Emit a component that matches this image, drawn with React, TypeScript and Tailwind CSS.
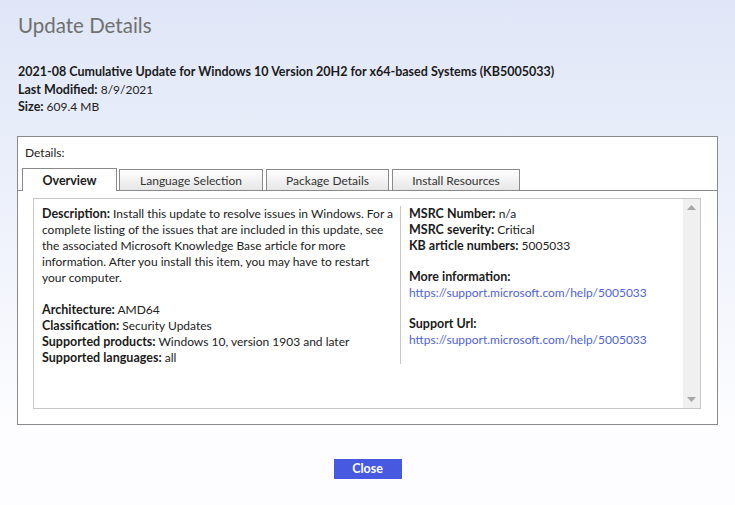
import React from 'react';

const tabs = [
  { label: 'Overview', w: 'w-[95px]', active: true },
  { label: 'Language Selection', w: 'w-[144px]', active: false },
  { label: 'Package Details', w: 'w-[123px]', active: false },
  { label: 'Install Resources', w: 'w-[128px]', active: false },
];

const Field: React.FC<{ label: string; value: string }> = ({ label, value }) => (
  <div>
    <span className="font-bold text-[12.5px] text-[#1b1b1b]">{label}</span> <span>{value}</span>
  </div>
);

const App: React.FC = () => {
  return (
    <div
      className="w-[735px] h-[505px] overflow-hidden bg-linear-to-b from-[#dfe6f7] to-[#fdfdff] to-85% text-[12px] text-[#222]"
      style={{ fontFamily: '"Segoe UI", Lato, "Noto Sans", sans-serif' }}
    >
      <div className="px-[18px] pt-[11px]">
        <h1 className="text-[20.5px] leading-[28px] text-[#707070]">Update Details</h1>

        <div className="mt-[24px] leading-[17.5px]">
          <div className="font-bold text-[12.5px] text-[#1b1b1b]">
            2021-08 Cumulative Update for Windows 10 Version 20H2 for x64-based Systems (KB5005033)
          </div>
          <Field label="Last Modified:" value="8/9/2021" />
          <Field label="Size:" value="609.4 MB" />
        </div>
      </div>

      {/* details panel */}
      <div className="ml-[17px] mt-[20px] w-[701px] h-[289px] border border-[#8a8a8a] bg-white flex flex-col">
        <div className="pl-[7px] pt-[8px] leading-[16px]">Details:</div>

        <div className="mt-[7px] flex items-end h-[23px]">
          <div className="w-[4px] border-b border-[#8a8a8a] h-full" />
          {tabs.map((t, i) =>
            t.active ? (
              <div
                key={t.label}
                className={`${t.w} h-[23px] pt-[3px] border border-b-0 border-[#8a8a8a] bg-white flex items-center justify-center font-bold text-[12.5px] text-[#1b1b1b]`}
              >
                {t.label}
              </div>
            ) : (
              <div key={t.label} className="flex items-end h-full border-b border-[#8a8a8a]">
                <div className={i === 1 ? 'w-[2px]' : 'w-[3px]'} />
                <div
                  className={`${t.w} h-[21px] pt-[3px] border border-b-0 border-[#8a8a8a] bg-linear-to-b from-white to-[#e6e6e6] flex items-center justify-center text-[#333]`}
                >
                  {t.label}
                </div>
              </div>
            )
          )}
          <div className="flex-1 h-full border-b border-[#8a8a8a]" />
        </div>

        <div className="ml-[15px] mt-[7px] w-[668px] h-[211px] border border-[#c8c8c8] flex">
          <div className="flex-1 flex pt-[7px] leading-[16px]">
            <div className="w-[366px] pl-[8px] pr-[5px]">
              <p>
                <span className="font-bold text-[12.5px] text-[#1b1b1b]">Description:</span> Install this update to
                resolve issues in Windows. For a complete listing of the issues that are included in this update, see
                the associated Microsoft Knowledge Base article for more information. After you install this item, you
                may have to restart your computer.
              </p>
              <div className="mt-[16px]">
                <Field label="Architecture:" value="AMD64" />
                <Field label="Classification:" value="Security Updates" />
                <Field label="Supported products:" value="Windows 10, version 1903 and later" />
                <Field label="Supported languages:" value="all" />
              </div>
            </div>
            <div className="w-px h-[158px] bg-[#c8c8c8]" />
            <div className="pl-[8px]">
              <Field label="MSRC Number:" value="n/a" />
              <Field label="MSRC severity:" value="Critical" />
              <Field label="KB article numbers:" value="5005033" />
              <div className="mt-[15px] font-bold text-[12.5px] text-[#1b1b1b]">More information:</div>
              <a className="block text-[#4f63d9]" href="#">
                https://support.microsoft.com/help/5005033
              </a>
              <div className="mt-[15px] font-bold text-[12.5px] text-[#1b1b1b]">Support Url:</div>
              <a className="block text-[#4f63d9]" href="#">
                https://support.microsoft.com/help/5005033
              </a>
            </div>
          </div>

          {/* scrollbar */}
          <div className="w-[17px] h-full bg-[#f0f0f0] flex flex-col items-center justify-between py-[6px]">
            <svg width="9" height="5" viewBox="0 0 9 5">
              <path d="M4.5 0L9 5H0z" fill="#a6a6a6" />
            </svg>
            <svg width="9" height="5" viewBox="0 0 9 5">
              <path d="M0 0h9L4.5 5z" fill="#a6a6a6" />
            </svg>
          </div>
        </div>
      </div>

      <div className="mt-[34px] flex justify-center">
        <button className="w-[68px] h-[20px] bg-[#4659e0] text-white font-bold text-[12.5px] leading-[20px]">
          Close
        </button>
      </div>
    </div>
  );
};

export default App;
